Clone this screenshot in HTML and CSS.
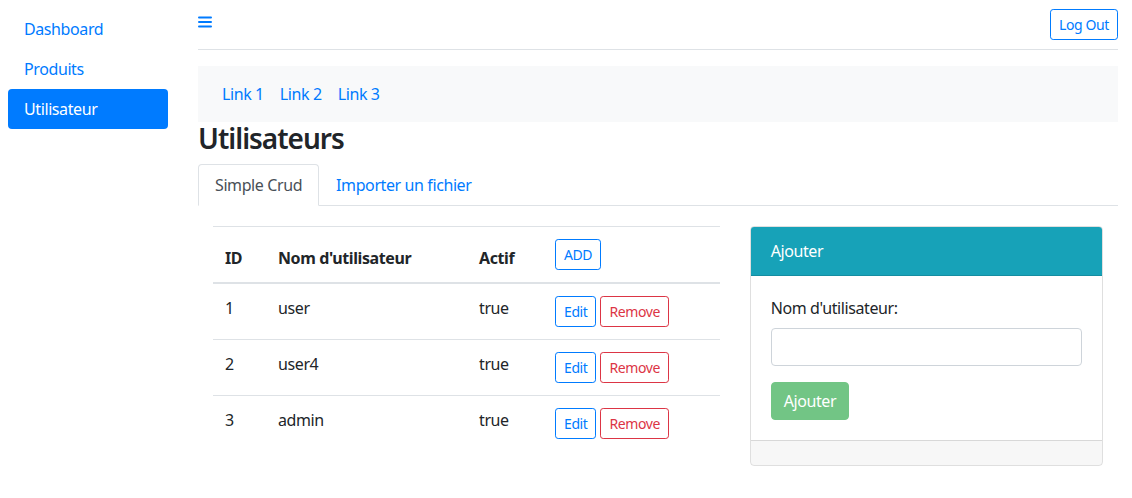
FILE: index.html
```html
<!DOCTYPE html>
<html lang="fr">
<head>
<meta charset="utf-8">
<title>Utilisateurs</title>
<link rel="stylesheet" href="styles.css">
</head>
<body>
<div class="layout">
  <aside class="sidebar">
    <a class="side-link" href="#">Dashboard</a>
    <a class="side-link" href="#">Produits</a>
    <a class="side-link active" href="#">Utilisateur</a>
  </aside>
  <main class="main">
    <header class="topbar">
      <a class="burger" href="#" aria-label="menu">
        <svg width="14" height="12" viewBox="0 0 14 12"><rect x="0" y="0.5" width="14" height="2" rx="1" fill="#007bff"/><rect x="0" y="5" width="14" height="2" rx="1" fill="#007bff"/><rect x="0" y="9.5" width="14" height="2" rx="1" fill="#007bff"/></svg>
      </a>
      <button class="btn btn-sm btn-outline-primary">Log Out</button>
    </header>
    <nav class="subnav">
      <a class="sub-link" href="#">Link 1</a>
      <a class="sub-link" href="#">Link 2</a>
      <a class="sub-link" href="#">Link 3</a>
    </nav>
    <h3 class="title">Utilisateurs</h3>
    <div class="tabs">
      <a class="tab active" href="#">Simple Crud</a>
      <a class="tab" href="#">Importer un fichier</a>
    </div>
    <div class="content">
      <div class="col">
        <table class="table">
          <thead>
            <tr>
              <th class="c-id">ID</th>
              <th class="c-name">Nom d'utilisateur</th>
              <th class="c-act">Actif</th>
              <th class="c-btn"><button class="btn btn-sm btn-outline-primary">ADD</button></th>
            </tr>
          </thead>
          <tbody>
            <tr>
              <td>1</td><td>user</td><td>true</td>
              <td class="actions"><button class="btn btn-sm btn-outline-primary">Edit</button><button class="btn btn-sm btn-outline-danger">Remove</button></td>
            </tr>
            <tr>
              <td>2</td><td>user4</td><td>true</td>
              <td class="actions"><button class="btn btn-sm btn-outline-primary">Edit</button><button class="btn btn-sm btn-outline-danger">Remove</button></td>
            </tr>
            <tr>
              <td>3</td><td>admin</td><td>true</td>
              <td class="actions"><button class="btn btn-sm btn-outline-primary">Edit</button><button class="btn btn-sm btn-outline-danger">Remove</button></td>
            </tr>
          </tbody>
        </table>
      </div>
      <div class="col">
        <div class="card">
          <div class="card-header">Ajouter</div>
          <div class="card-body">
            <label class="label" for="username">Nom d'utilisateur:</label>
            <input class="form-control" id="username" type="text">
            <button class="btn btn-success" disabled>Ajouter</button>
          </div>
          <div class="card-footer"></div>
        </div>
      </div>
    </div>
  </main>
</div>
</body>
</html>
```

FILE: styles.css
```css
* { box-sizing: border-box; }
html, body { margin: 0; padding: 0; }
body {
  font-family: "Noto Sans", "Open Sans", Arial, sans-serif;
  font-size: 16px;
  line-height: 1.5;
  letter-spacing: -0.4px;
  color: #212529;
  background: #fff;
}
a { text-decoration: none; color: #007bff; }

.layout {
  display: flex;
  gap: 30px;
  padding: 8px 14px 8px 8px;
}
.sidebar {
  width: 160px;
  flex: none;
  display: flex;
  flex-direction: column;
  padding-top: 1px;
}
.side-link {
  display: block;
  padding: 8px 16px;
  border-radius: 4px;
  color: #007bff;
}
.side-link.active { background: #007bff; color: #fff; }

.main { flex: 1; min-width: 0; }

.topbar {
  display: flex;
  justify-content: space-between;
  align-items: flex-start;
  padding: 1px 0 9px;
  border-bottom: 1px solid #dee2e6;
}
.burger { display: block; margin-top: 7px; line-height: 0; }

.btn {
  display: inline-block;
  font-family: inherit;
  font-size: 16px;
  line-height: 1.5;
  letter-spacing: -0.4px;
  padding: 6px 12px;
  border: 1px solid transparent;
  border-radius: 4px;
  background: transparent;
  cursor: pointer;
}
.btn-sm { font-size: 14px; padding: 4px 8px; border-radius: 3.2px; line-height: 21px; }
.btn-outline-primary { color: #007bff; border-color: #007bff; }
.btn-outline-danger { color: #dc3545; border-color: #dc3545; }
.btn-success {
  color: #fff;
  background: #28a745;
  border-color: #28a745;
  opacity: .65;
}

.subnav {
  display: flex;
  margin-top: 16px;
  padding: 8px 16px;
  background: #f8f9fa;
}
.sub-link { padding: 8px; }

.title {
  margin: 0 0 8px;
  font-size: 28px;
  font-weight: 600;
  line-height: 1.2;
  letter-spacing: -1px;
}

.tabs {
  display: flex;
  border-bottom: 1px solid #dee2e6;
}
.tab {
  padding: 8px 16px;
  border: 1px solid transparent;
  border-top-left-radius: 4px;
  border-top-right-radius: 4px;
  margin-bottom: -1px;
}
.tab.active {
  color: #495057;
  border-color: #dee2e6 #dee2e6 #fff;
  background: #fff;
}

.content {
  display: grid;
  grid-template-columns: 7fr 5fr;
  padding-top: 20px;
}
.col { padding: 0 15px; }

.table {
  width: 100%;
  border-collapse: collapse;
}
.table th, .table td {
  padding: 12px;
  text-align: left;
  vertical-align: top;
  border-top: 1px solid #dee2e6;
}
.table thead th {
  vertical-align: bottom;
  border-bottom: 2px solid #dee2e6;
  font-weight: 700;
}
.c-id { width: 53px; }
.c-name { width: 201px; }
.c-act { width: 76px; }
.actions .btn + .btn { margin-left: 4px; }

.card {
  border: 1px solid rgba(0,0,0,.125);
  border-radius: 4px;
  overflow: hidden;
}
.card-header {
  background: #17a2b8;
  color: #fff;
  padding: 12px 20px;
  border-bottom: 1px solid rgba(0,0,0,.125);
}
.card-body {
  padding: 20px;
  display: flex;
  flex-direction: column;
  align-items: flex-start;
}
.label { display: block; margin-bottom: 8px; }
.form-control {
  display: block;
  width: 100%;
  height: 38px;
  padding: 6px 12px;
  font: inherit;
  color: #495057;
  border: 1px solid #ced4da;
  border-radius: 4px;
  margin-bottom: 16px;
}
.card-footer {
  height: 25px;
  background: rgba(0,0,0,.03);
  border-top: 1px solid rgba(0,0,0,.125);
}
```
